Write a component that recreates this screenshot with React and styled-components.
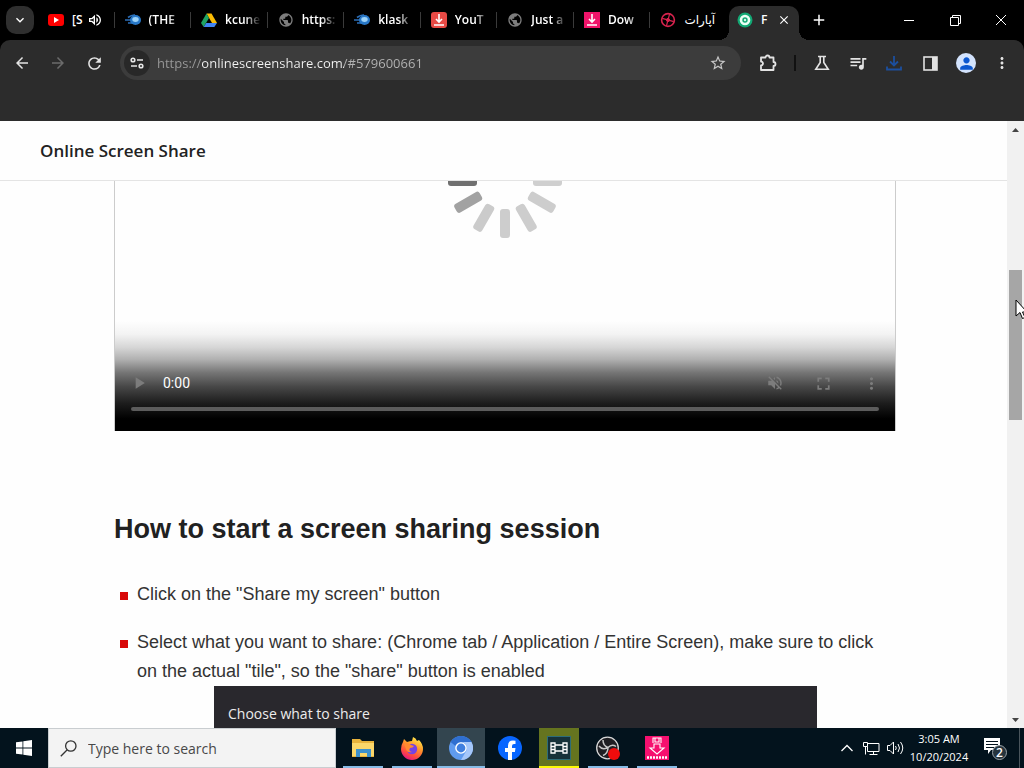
import React from "react";
import styled, { createGlobalStyle } from "styled-components";
import {
  MdArrowBack, MdArrowForward, MdRefresh, MdStarBorder,
  MdQueueMusic, MdMoreVert, MdPerson, MdClose, MdAdd,
  MdExpandMore, MdPlayArrow, MdVolumeOff, MdFullscreen, MdPublic, MdOutlineVolumeUp,
} from "react-icons/md";

const ui = `"Open Sans", "Noto Sans", sans-serif`;
const body = `"Liberation Sans", Arial, sans-serif`;

const GlobalStyle = createGlobalStyle`
  * { box-sizing: border-box; }
  body { margin: 0; background: #000; font-family: ${ui}; }
  button { border: 0; padding: 0; background: none; color: inherit; font: inherit; display: flex; align-items: center; justify-content: center; }
  svg { display: block; flex: none; }
`;

const Desktop = styled.div`
  display: flex;
  flex-direction: column;
  height: 100vh;
  overflow: hidden;
`;

/* ---------- browser frame ---------- */
const TabStrip = styled.div`
  display: flex;
  height: 40px;
  flex: none;
  background: #000;
  color: #fff;
`;
const TabSearch = styled.button`
  && { background: #2f2f2f; }
  width: 28px;
  height: 28px;
  margin: 6px;
  border-radius: 10px;
  flex: none;
`;
const Tabs = styled.div`
  display: grid;
  grid-template-columns: repeat(9, minmax(0, 1fr)) 70px;
  flex: 0 1 759px;
  min-width: 0;
`;
const Tab = styled.button`
  && { justify-content: flex-start; }
  padding-left: 8px;
  min-width: 0;
`;
const ActiveTab = styled.div`
  display: flex;
  align-items: center;
  padding: 0 8px 6px;
  margin-top: 6px;
  background: #2c2c2c;
  border-radius: 10px 10px 0 0;
  position: relative;
  &::before, &::after {
    content: "";
    position: absolute;
    bottom: 0;
    width: 10px;
    height: 10px;
  }
  &::before { right: 100%; background: radial-gradient(circle at 0 0, transparent 10px, #2c2c2c 10px); }
  &::after { left: 100%; background: radial-gradient(circle at 100% 0, transparent 10px, #2c2c2c 10px); }
`;
const TabTitle = styled.span`
  flex: 1;
  min-width: 0;
  margin-left: 8px;
  font-size: 12px;
  line-height: 18px;
  white-space: nowrap;
  text-align: left;
  direction: ${(p) => (p.$rtl ? "rtl" : "ltr")};
  font-family: ${(p) => (p.$rtl ? `"DejaVu Sans", sans-serif` : ui)};
  font-weight: ${(p) => (p.$rtl ? 400 : 600)};
  mask-image: ${(p) => (p.$fade ? "linear-gradient(90deg, #000 50%, transparent 90%)" : "none")};
`;
const TabDivider = styled.span`
  width: 1px;
  height: 16px;
  margin: 0 2px;
  background: #3a3a3a;
`;
const AudioIcon = styled.span`
  margin-right: 9px;
`;
const NewTab = styled.button`
  width: 40px;
  flex: none;
`;
const WindowControls = styled.div`
  display: flex;
  margin-left: auto;
`;
const WindowButton = styled.button`
  width: 46px;
`;
const Toolbar = styled.div`
  display: flex;
  align-items: center;
  height: 46px;
  padding: 0 4px;
  flex: none;
  background: #2c2c2c;
  color: #e3e3e3;
  border-radius: 10px 10px 0 0;
`;
const ToolButton = styled.button`
  && { color: ${(p) => p.$color || "#e3e3e3"}; }
  width: 36px;
  height: 36px;
  flex: none;
`;
const Omnibox = styled.div`
  display: flex;
  align-items: center;
  flex: 1;
  height: 34px;
  margin: 0 9px 0 8px;
  padding: 0 5px 0 4px;
  border-radius: 17px;
  background: #3c3c3c;
`;
const SiteInfo = styled.button`
  && { background: #282828; }
  width: 26px;
  height: 26px;
  border-radius: 13px;
  flex: none;
`;
const Address = styled.input`
  flex: 1;
  min-width: 0;
  height: 24px;
  margin-left: 7px;
  padding: 0;
  border: 0;
  outline: 0;
  font: 13px/24px ${ui};
  color: transparent;
  background: linear-gradient(90deg, #9a9a9a 45px, #f4f4f4 45px, #f4f4f4 187px, #b4b4b4 187px);
  background-clip: text;
  -webkit-text-fill-color: transparent;
`;
const ToolDivider = styled.span`
  width: 2px;
  height: 16px;
  margin: 0 8px;
  background: #111;
`;
const Avatar = styled.span`
  display: flex;
  align-items: center;
  justify-content: center;
  width: 20px;
  height: 20px;
  border-radius: 10px;
  overflow: hidden;
  background: #d3e3fd;
  color: #0b57d0;
`;
const BookmarkBar = styled.div`
  height: 35px;
  flex: none;
  background: #2c2c2c;
`;

/* ---------- web page ---------- */
const Viewport = styled.div`
  display: flex;
  flex: 1;
  min-height: 0;
  position: relative;
  background: #fefefe;
`;
const Page = styled.div`
  flex: 1;
  min-width: 0;
  overflow: hidden;
`;
const SiteHeader = styled.header`
  height: 60px;
  padding: 0 40px;
  display: flex;
  align-items: center;
  border-bottom: 1px solid #e4e4e4;
  font: 600 17px/24px ${ui};
  color: #222;
`;
const Main = styled.main`
  padding: 0 111px 0 114px;
  font-family: ${body};
`;
const Video = styled.section`
  display: flex;
  flex-direction: column;
  align-items: center;
  justify-content: space-between;
  height: 250px;
  overflow: hidden;
  border: 1px solid #ccc;
  border-width: 0 1px;
`;
const Spinner = styled.svg`
  margin-top: -57px;
`;
const Controls = styled.div`
  align-self: stretch;
  padding-top: 38px;
  color: #7c7c7c;
  margin: 0 -1px;
  background: linear-gradient(transparent, #f3f3f3 12%, #d6d6d6 24%, #b0b0b0 35%, #757575 47%, #464646 60%, #1c1c1c 75%, #000 89%);
`;
const ControlRow = styled.div`
  display: flex;
  align-items: center;
  height: 48px;
  padding: 0 1px;
`;
const ControlButton = styled.button`
  width: 48px;
  height: 48px;
`;
const Time = styled.span`
  flex: 1;
  color: #fff;
  font: 14px/20px Roboto, sans-serif;
`;
const Timeline = styled.input`
  appearance: none;
  display: block;
  width: calc(100% - 34px);
  height: 4px;
  margin: 0 17px 20px;
  border-radius: 2px;
  background: #5c5c5c;
  &::-webkit-slider-thumb { appearance: none; width: 0; height: 0; }
`;
const Heading = styled.h2`
  margin: 80px 0 0;
  font-size: 27px;
  line-height: 36px;
  color: #212121;
`;
const Steps = styled.ul`
  list-style: none;
  margin: 33px 0 0;
  padding: 0;
  display: grid;
  gap: 19px;
`;
const Step = styled.li`
  display: flex;
  gap: 9px;
  padding-left: 6px;
  font-size: 18px;
  line-height: 29px;
  color: #333;
  &::before {
    content: "";
    flex: none;
    width: 8px;
    height: 8px;
    margin-top: 12px;
    background: #d80808;
  }
`;
const ScrollBar = styled.div`
  display: flex;
  flex-direction: column;
  align-items: center;
  width: 17px;
  background: #f1f1f1;
`;
const ScrollArrow = styled.button`
  width: 17px;
  height: 17px;
  flex: none;
`;
const ScrollGap = styled.span`
  flex: ${(p) => p.$size};
`;
const ScrollThumb = styled.span`
  flex: 150;
  width: 13px;
  background: #a6a6a6;
`;
const ShareDialog = styled.div`
  position: absolute;
  left: 214px;
  bottom: 0;
  width: 603px;
  height: 42px;
  padding: 17px 14px 0;
  background: #29282d;
  color: #ececec;
  font-size: 14px;
  line-height: 22px;
`;
const Pointer = styled.svg`
  position: absolute;
  right: -4px;
  top: 178px;
`;

/* ---------- taskbar ---------- */
const Taskbar = styled.footer`
  display: flex;
  height: 40px;
  flex: none;
  background: #03131d;
  color: #fff;
`;
const StartButton = styled.button`
  width: 48px;
`;
const SearchBox = styled.label`
  display: flex;
  align-items: center;
  gap: 11px;
  width: 288px;
  padding: 0 11px;
  background: #f3f3f3;
  border: 1px solid #c9cdd0;
`;
const SearchInput = styled.input`
  flex: 1;
  min-width: 0;
  padding: 2px 0 0;
  border: 0;
  outline: 0;
  background: transparent;
  font: 14px/24px ${ui};
  &::placeholder { color: #484848; opacity: 1; }
`;
const Apps = styled.div`
  display: flex;
  gap: 1px;
  padding-left: 3px;
`;
const AppButton = styled.button`
  && { background: ${(p) => p.$fill || "transparent"}; }
  width: ${(p) => (p.$narrow ? 40 : 48)}px;
  margin: ${(p) => (p.$narrow ? "0 4px" : "0")};
  position: relative;
  &::after {
    content: "";
    position: absolute;
    bottom: 0;
    left: ${(p) => (p.$fill ? 0 : 4)}px;
    right: ${(p) => (p.$fill ? 0 : 4)}px;
    height: 2px;
    background: ${(p) => p.$line || "transparent"};
  }
`;
const Tray = styled.div`
  display: flex;
  margin-left: auto;
`;
const TrayButton = styled.button`
  width: 24px;
`;
const Clock = styled.button`
  && { flex-direction: column; }
  width: 64px;
  font-size: 11px;
  line-height: 18px;
  white-space: nowrap;
`;
const Notifications = styled.button`
  width: 48px;
`;
const ShowDesktop = styled.button`
  && { border-left: 1px solid #4a555c; }
  width: 5px;
`;

/* ---------- drawings ---------- */
const YouTube = () => (
  <svg width="16" height="16" viewBox="0 0 16 16"><rect y="2" width="16" height="12" rx="3" fill="#f00" /><path d="M6 5l5 3-5 3z" fill="#fff" /></svg>
);
const Comet = () => (
  <svg width="16" height="16" viewBox="0 0 16 16"><path d="M3 5.500q4-3 7-2.500M0 8h6M3 11h5" stroke="#2d6fb8" strokeWidth="1.600" fill="none" /><ellipse cx="10.500" cy="8" rx="5.500" ry="5" fill="#2878c8" /><ellipse cx="10.500" cy="7.500" rx="3.200" ry="2.400" fill="#9cd2f8" /></svg>
);
const Drive = () => (
  <svg width="16" height="16" viewBox="0 0 16 16"><path d="M5.500 1.500h5L16 11h-5z" fill="#fbbc04" /><path d="M5.500 1.500L8 6 2.700 15 0 11z" fill="#1fa463" /><path d="M5.200 11H16l-2.700 4H2.700z" fill="#4285f4" /></svg>
);
const Globe = () => <MdPublic size={16} color="#7d7d7d" />;
const Downloader = ({ pink }) => (
  <svg width="16" height="16" viewBox="0 0 16 16"><rect width="16" height="16" rx={pink ? 0 : 3} fill={pink ? "#f0146a" : "#e84a45"} /><path d="M8 2v8M5 7l3 3 3-3M3 13h10" stroke="#fff" strokeWidth="1.600" fill="none" /></svg>
);
const Aparat = () => (
  <svg width="16" height="16" viewBox="0 0 16 16" fill="none" stroke="#d8234e"><circle cx="8" cy="8" r="6.400" strokeWidth="1.600" /><path d="M8 2v12M2 8h12" strokeWidth="1.200" transform="rotate(15 8 8)" /><circle cx="8" cy="8" r="1.600" fill="#d8234e" /></svg>
);
const Sharing = () => (
  <svg width="16" height="16" viewBox="0 0 16 16"><circle cx="8" cy="8" r="7.500" fill="#12a874" /><circle cx="8" cy="8" r="4" fill="none" stroke="#eafff5" strokeWidth="2.600" /><circle cx="8" cy="8" r="1.200" fill="#d4f8e8" /></svg>
);
const Puzzle = () => (
  <svg width="18" height="18" viewBox="0 0 18 18" fill="none" stroke="#e3e3e3" strokeWidth="1.800" strokeLinejoin="round"><path d="M2 3.500h4.500a2 2 0 0 1 4 0h4v4.500a2 2 0 0 1 0 4v4H2v-4.500a2 2 0 0 0 0-4z" /></svg>
);
const Explorer = () => (
  <svg width="24" height="24" viewBox="0 0 24 24"><path d="M1 3h8l2 2h12v16H1z" fill="#e8b33c" /><path d="M1 7h22v13H1z" fill="#fbd76a" /><path d="M5 21v-8h15v8h-4v-4H9v4z" fill="#3d91cd" /></svg>
);
const Firefox = () => (
  <svg width="24" height="24" viewBox="0 0 24 24">
    <defs><linearGradient id="fx" x1="0.8" y1="0" x2="0.3" y2="1"><stop offset="0" stopColor="#fff44f" /><stop offset="0.4" stopColor="#ff9a2b" /><stop offset="0.75" stopColor="#ff4a3f" /><stop offset="1" stopColor="#e31587" /></linearGradient></defs>
    <path d="M3 6l1-3 3 3q3-1 5-1l1-4q3 1 4 4l2-1q4 4 4 9a11 11 0 0 1-22 0q0-4 2-7z" fill="url(#fx)" />
    <circle cx="12" cy="13" r="5.200" fill="#7542e5" /><path d="M4 8q4-2 7 1l3 1q-1 2-4 2-2 3 2 4-5 1-6-3z" fill="#ff8a30" />
  </svg>
);
const Chromium = () => (
  <svg width="24" height="24" viewBox="0 0 24 24"><circle cx="12" cy="12" r="12" fill="#5f9bef" /><path d="M1.600 6A12 12 0 0 1 22.400 6H12a6 6 0 0 0-5.500 4z" fill="#2f6fd0" /><path d="M22.400 6A12 12 0 0 1 12 24l5.200-9A6 6 0 0 0 12 6z" fill="#a5c7fa" /><circle cx="12" cy="12" r="5.800" fill="#fff" /><circle cx="12" cy="12" r="4.400" fill="#3f7fdf" /></svg>
);
const Facebook = () => (
  <svg width="24" height="24" viewBox="0 0 24 24"><circle cx="12" cy="12" r="12" fill="#0866ff" /><path d="M10 24v-8H7v-4h3V9.500q0-5 5-5l2.500.2V8H16q-2 0-2 2v2h3.500l-.6 4H14v8z" fill="#fff" /></svg>
);
const Film = () => (
  <svg width="24" height="24" viewBox="0 0 24 24"><rect width="24" height="24" fill="#17323a" /><path d="M0 0h24v24H0z" fill="none" stroke="#2d6d79" strokeWidth="2" /><path d="M4 7v10h4V7zM16 7v10h4V7zM8 9h8M8 15h8M4 10.500h4M4 13.500h4M16 10.500h4M16 13.500h4" stroke="#fff" strokeWidth="1.300" fill="none" /></svg>
);
const Obs = () => (
  <svg width="24" height="24" viewBox="0 0 24 24"><circle cx="11.500" cy="12" r="10.800" fill="#1f1f23" stroke="#d8d8d8" strokeWidth="1.300" /><path d="M7 4q0 6 5 7.500M12 11.500q4-4 8-1M12 11.500q0 6-5 8M11 12q-5 2-8-2" stroke="#c8c8c8" strokeWidth="1.500" fill="none" /><circle cx="18" cy="18" r="6" fill="#f00c0c" /></svg>
);
const PinkSaver = () => (
  <svg width="24" height="24" viewBox="0 0 24 24"><rect width="24" height="24" fill="#f6106f" /><path d="M8 7V2h8v5M10 2v4h4V2M9 8v4H5l7 6 7-6h-4V8z" stroke="#fff" strokeWidth="1.100" fill="none" /><path d="M2 21.500h20" stroke="#fff" strokeWidth="2.600" strokeDasharray="2 1" fill="none" /></svg>
);

const tabs = [
  { icon: <YouTube />, title: "[S", audio: true },
  { icon: <Comet />, title: "(THE" },
  { icon: <Drive />, title: "kcune" },
  { icon: <Globe />, title: "https:" },
  { icon: <Comet />, title: "klask" },
  { icon: <Downloader />, title: "YouT" },
  { icon: <Globe />, title: "Just a" },
  { icon: <Downloader pink />, title: "Dow" },
  { icon: <Aparat />, title: "آپارات", rtl: true },
];

const bars = [
  [0, "#cfcfcf"], [30, "#cdcdcd"], [60, "#cdcdcd"], [90, "#cdcdcd"],
  [120, "#cbcbcb"], [150, "#a2a2a2"], [180, "#707070"],
];

export default function App() {
  return (
    <Desktop>
      <GlobalStyle />
      <TabStrip>
        <TabSearch aria-label="Search tabs"><MdExpandMore size={16} /></TabSearch>
        <Tabs>
          {tabs.map((t, i) => (
            <Tab key={i}>
              {t.icon}
              <TabTitle $fade={!t.audio && !t.rtl} $rtl={t.rtl}>{t.title}</TabTitle>
              {t.audio && <AudioIcon><MdOutlineVolumeUp size={16} /></AudioIcon>}
              {t.rtl ? null : <TabDivider />}
            </Tab>
          ))}
          <ActiveTab>
            <Sharing />
            <TabTitle>F</TabTitle>
            <button aria-label="Close tab"><MdClose size={14} /></button>
          </ActiveTab>
        </Tabs>
        <NewTab aria-label="New tab"><MdAdd size={18} /></NewTab>
        <WindowControls>
          <WindowButton aria-label="Minimize"><svg width="10" height="10"><path d="M0 5.500h10" stroke="#fff" /></svg></WindowButton>
          <WindowButton aria-label="Restore"><svg width="11" height="11" fill="none" stroke="#fff"><path d="M.5 2.500h8v8h-8zM2.500 2.500v-2h8v8h-2" /></svg></WindowButton>
          <WindowButton aria-label="Close"><svg width="12" height="12"><path d="M1 1l10 10M11 1L1 11" stroke="#fff" /></svg></WindowButton>
        </WindowControls>
      </TabStrip>
      <Toolbar>
        <ToolButton aria-label="Back"><MdArrowBack size={18} /></ToolButton>
        <ToolButton aria-label="Forward" $color="#6b6b6b"><MdArrowForward size={18} /></ToolButton>
        <ToolButton aria-label="Reload"><MdRefresh size={19} /></ToolButton>
        <Omnibox>
          <SiteInfo aria-label="Site information">
            <svg width="14" height="12" viewBox="0 0 14 12" fill="none" stroke="#e8e8e8" strokeWidth="1.600"><circle cx="3" cy="3" r="1.800" /><path d="M7 3h6M1 9h6" /><circle cx="11" cy="9" r="1.800" /></svg>
          </SiteInfo>
          <Address aria-label="Address" defaultValue="https://onlinescreenshare.com/#579600661" />
          <ToolButton aria-label="Bookmark" $color="#c7c7c7"><MdStarBorder size={18} /></ToolButton>
        </Omnibox>
        <ToolButton aria-label="Extensions"><Puzzle /></ToolButton>
        <ToolDivider />
        <ToolButton aria-label="Labs">
          <svg width="16" height="16" viewBox="0 0 16 16" fill="none" stroke="#e3e3e3" strokeWidth="1.600"><path d="M4 1.500h8M6.200 1.500v6L1.800 14.200h12.400L9.800 7.500v-6" /></svg>
        </ToolButton>
        <ToolButton aria-label="Media"><MdQueueMusic size={20} /></ToolButton>
        <ToolButton aria-label="Downloads">
          <svg width="16" height="16" viewBox="0 0 16 16" fill="none" stroke="#1c4f9e" strokeWidth="1.800"><path d="M8 1v9M4 6.500l4 4 4-4M1 11.500v3h14v-3" /></svg>
        </ToolButton>
        <ToolButton aria-label="Side panel">
          <svg width="15" height="15" viewBox="0 0 15 15"><rect x="1" y="1" width="13" height="13" fill="none" stroke="#e3e3e3" strokeWidth="1.600" /><path d="M9 1h5v13H9z" fill="#e3e3e3" /></svg>
        </ToolButton>
        <ToolButton aria-label="Profile"><Avatar><MdPerson size={19} /></Avatar></ToolButton>
        <ToolButton aria-label="Menu"><MdMoreVert size={18} /></ToolButton>
      </Toolbar>
      <BookmarkBar />

      <Viewport>
        <Page>
          <SiteHeader>Online Screen Share</SiteHeader>
          <Main>
            <Video>
              <Spinner width="114" height="114" viewBox="-57 -57 114 114">
                {bars.map(([a, c]) => (
                  <rect key={a} x="28" y="-5" width="29" height="10" rx="3" fill={c} transform={`rotate(${a})`} />
                ))}
              </Spinner>
              <Controls>
                <ControlRow>
                  <ControlButton aria-label="Play"><MdPlayArrow size={20} /></ControlButton>
                  <Time>0:00</Time>
                  <ControlButton aria-label="Unmute"><MdVolumeOff size={18} /></ControlButton>
                  <ControlButton aria-label="Full screen"><MdFullscreen size={21} /></ControlButton>
                  <ControlButton aria-label="More options"><MdMoreVert size={19} /></ControlButton>
                </ControlRow>
                <Timeline type="range" aria-label="Video position" defaultValue="0" />
              </Controls>
            </Video>
            <Heading>How to start a screen sharing session</Heading>
            <Steps>
              <Step>Click on the "Share my screen" button</Step>
              <Step>Select what you want to share: (Chrome tab / Application / Entire Screen), make sure to click on the actual "tile", so the "share" button is enabled</Step>
            </Steps>
          </Main>
        </Page>
        <ScrollBar>
          <ScrollArrow aria-label="Scroll up"><svg width="7" height="4"><path d="M0 4l3.500-4L7 4z" fill="#444" /></svg></ScrollArrow>
          <ScrollGap $size={132} />
          <ScrollThumb />
          <ScrollGap $size={291} />
          <ScrollArrow aria-label="Scroll down"><svg width="7" height="4"><path d="M0 0l3.500 4L7 0z" fill="#444" /></svg></ScrollArrow>
        </ScrollBar>
        <ShareDialog>Choose what to share</ShareDialog>
        <Pointer width="13" height="21" viewBox="0 0 13 21"><path d="M1 1v16l4-3.500 2.500 6 2.500-1-2.500-5.500H12z" fill="#fff" stroke="#000" /></Pointer>
      </Viewport>

      <Taskbar>
        <StartButton aria-label="Start">
          <svg width="16" height="16" viewBox="0 0 16 16" fill="#fff"><path d="M0 2.300L6.500 1.400v6.200H0zM7.300 1.300L16 0v7.600H7.300zM0 8.400h6.500v6.200L0 13.700zM7.300 8.400H16V16l-8.700-1.300z" /></svg>
        </StartButton>
        <SearchBox>
          <svg width="17" height="17" viewBox="0 0 17 17" fill="none" stroke="#333" strokeWidth="1.300"><circle cx="10.800" cy="6" r="5.200" /><path d="M7 10L.8 16.200" /></svg>
          <SearchInput aria-label="Search" placeholder="Type here to search" />
        </SearchBox>
        <Apps>
          <AppButton aria-label="File Explorer" $line="#86bbe6"><Explorer /></AppButton>
          <AppButton aria-label="Firefox" $line="#86bbe6"><Firefox /></AppButton>
          <AppButton aria-label="Chromium" $fill="#33454f" $line="#86bbe6"><Chromium /></AppButton>
          <AppButton aria-label="Facebook"><Facebook /></AppButton>
          <AppButton aria-label="Movie maker" $fill="#65741f" $line="#fdfa05" $narrow><Film /></AppButton>
          <AppButton aria-label="OBS Studio" $line="#86bbe6"><Obs /></AppButton>
          <AppButton aria-label="Video saver" $line="#86bbe6"><PinkSaver /></AppButton>
        </Apps>
        <Tray>
          <TrayButton aria-label="Hidden icons"><svg width="12" height="8"><path d="M.5 7L6 1.500 11.500 7" fill="none" stroke="#fff" strokeWidth="1.300" /></svg></TrayButton>
          <TrayButton aria-label="Network"><svg width="17" height="15" viewBox="0 0 17 15" fill="none" stroke="#fff"><path d="M5 2.500h11v8H4.500v-5M.5 1.500h4v4h-4zM2.500 5.500v8M10.500 10.500v3M6.500 13.500h8" /></svg></TrayButton>
          <TrayButton aria-label="Volume"><svg width="17" height="14" viewBox="0 0 17 14" fill="none" stroke="#fff"><path d="M.5 4.500h2.500l3.500-3.500v12L3 9.500H.5zM8.500 5q1.500 2 0 4M11 3q3 4 0 8M13.500 1q4.500 6 0 12" /></svg></TrayButton>
          <Clock><span>3:05 AM</span><span>10/20/2024</span></Clock>
          <Notifications aria-label="2 notifications">
            <svg width="26" height="24" viewBox="0 0 26 24"><path d="M2 2h16v12H9l-3 4v-4H2z" fill="#fff" /><path d="M4 5.500h12M4 8.500h12M4 11.500h8" stroke="#03131d" /><circle cx="17.500" cy="16.500" r="7" fill="#26343d" stroke="#9aa3a8" /><text x="17.500" y="20.500" fontSize="12" fontWeight="600" fill="#fff" textAnchor="middle" fontFamily="Open Sans">2</text></svg>
          </Notifications>
          <ShowDesktop aria-label="Show desktop" />
        </Tray>
      </Taskbar>
    </Desktop>
  );
}
